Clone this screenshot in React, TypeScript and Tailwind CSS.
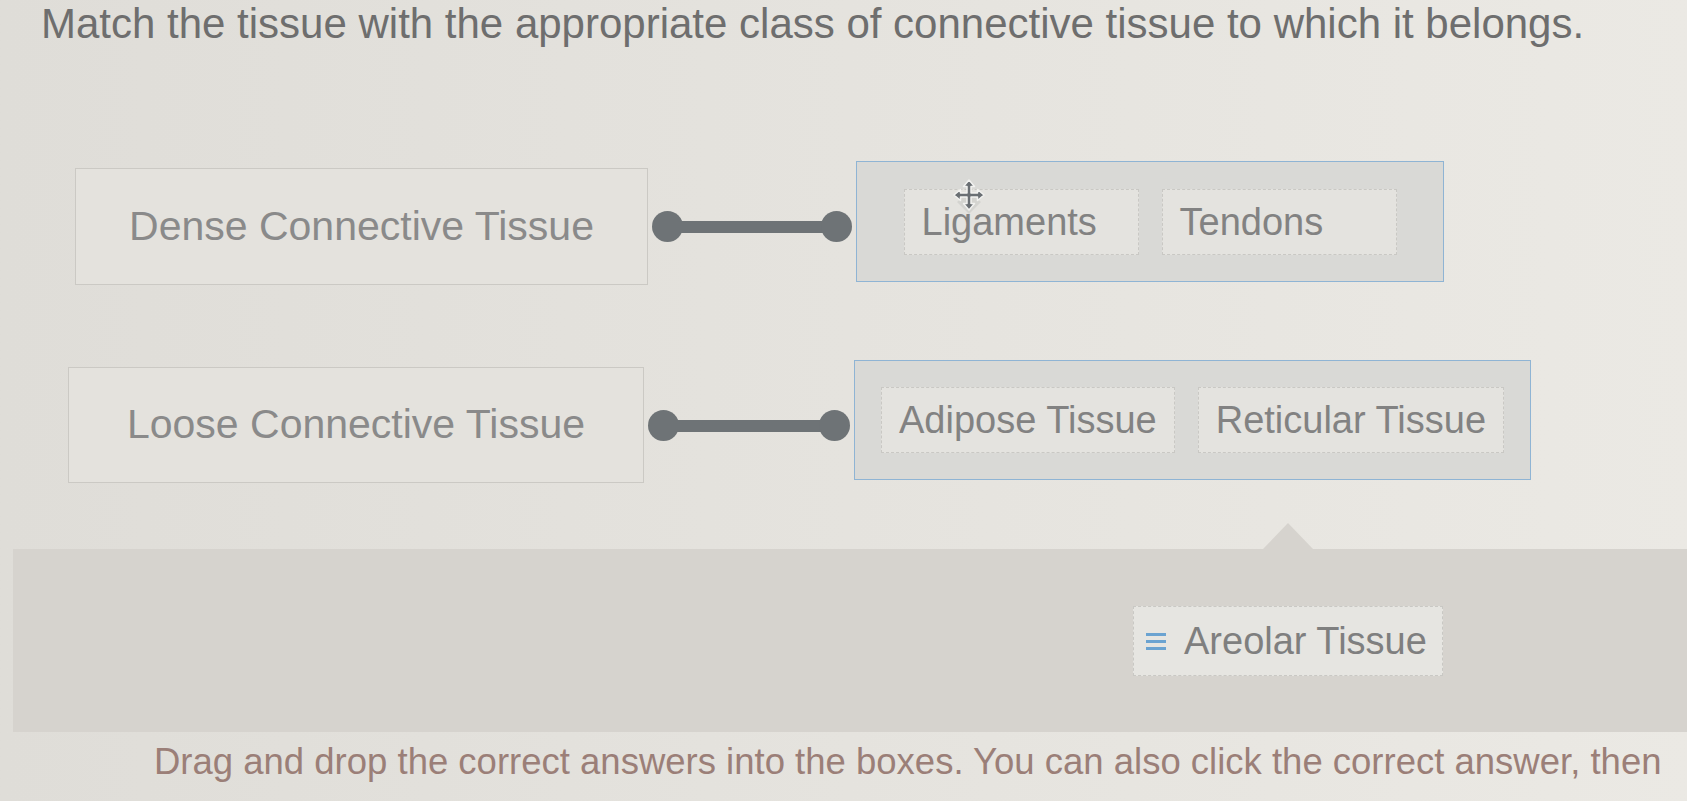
const font = { fontFamily: '"Liberation Sans", Arial, sans-serif' };

function MoveCursor() {
  return (
    <svg
      width="36"
      height="38"
      viewBox="0 0 36 38"
      className="absolute left-[46px] top-[-12px]"
    >
      <path d="M18 14 L30 24 L18 36 L6 24 Z" fill="#cfcfcc" opacity="0.8" />
      <path
        d="M18 2 L23.5 8.5 L20 8.5 L20 15 L26.5 15 L26.5 11.5 L33 17 L26.5 22.5 L26.5 19 L20 19 L20 25.5 L23.5 25.5 L18 32 L12.5 25.5 L16 25.5 L16 19 L9.5 19 L9.5 22.5 L3 17 L9.5 11.5 L9.5 15 L16 15 L16 8.5 L12.5 8.5 Z"
        fill="#6a6f73"
        stroke="#f2f2f0"
        strokeWidth="1.5"
        strokeLinejoin="round"
      />
    </svg>
  );
}

function Chip({ label, cursor }: { label: string; cursor?: boolean }) {
  return (
    <div className="relative flex h-[66px] min-w-[235px] items-center border-[1.5px] border-dashed border-[#c9c8c4] bg-[#e4e3df] px-[17px] text-[38px] text-[#828282]">
      {cursor && <MoveCursor />}
      <span className="leading-none">{label}</span>
    </div>
  );
}

function Connector({ width }: { width: string }) {
  return (
    <div className={`flex items-center px-[4px] ${width}`}>
      <div className="h-[31px] w-[31px] shrink-0 rounded-full bg-[#6e7376]" />
      <div className="-mx-[4px] h-[12px] flex-1 bg-[#6e7376]" />
      <div className="h-[31px] w-[31px] shrink-0 rounded-full bg-[#6e7376]" />
    </div>
  );
}

const rows = [
  {
    label: "Dense Connective Tissue",
    answers: ["Ligaments", "Tendons"],
    pad: "pl-[75px]",
    box: "w-[573px] h-[117px]",
    conn: "w-[208px]",
    zoneH: "h-[121px]",
  },
  {
    label: "Loose Connective Tissue",
    answers: ["Adipose Tissue", "Reticular Tissue"],
    pad: "pl-[68px]",
    box: "w-[576px] h-[116px]",
    conn: "w-[210px]",
    zoneH: "h-[120px]",
  },
];

export default function App() {
  return (
    <div
      className="relative h-[801px] w-[1687px] overflow-hidden bg-gradient-to-r from-[#dfddd8] via-[#e5e3de] to-[#ebe9e4]"
      style={font}
    >
      <h1 className="pl-[41px] text-[42px] font-normal leading-[48px] text-[#6e6e6e]">
        Match the tissue with the appropriate class of connective tissue to which it belongs.
      </h1>

      <div className="mt-[113px] flex flex-col gap-[75px]">
        {rows.map((r, i) => (
          <div key={r.label} className={`flex items-start ${r.pad}`}>
            <div
              className={`mt-[7px] flex items-center justify-center border border-[#cbc9c4] bg-[#e4e2dd] text-[41px] text-[#8a8a8a] ${r.box}`}
            >
              {r.label}
            </div>
            <div className="mt-[50px]">
              <Connector width={r.conn} />
            </div>
            <div
              className={`flex min-w-[588px] items-center justify-center gap-[23px] border-[1.5px] border-[#8fb4d4] bg-[#d9d9d6] px-[26px] ${r.zoneH}`}
            >
              {r.answers.map((a, j) => (
                <Chip key={a} label={a} cursor={i === 0 && j === 0} />
              ))}
            </div>
          </div>
        ))}
      </div>

      <div className="relative ml-[13px] mt-[66px] flex h-[183px] items-center bg-[#d6d3ce] pl-[1120px]">
        <div className="absolute left-[1250px] top-[-26px] h-0 w-0 border-x-[25px] border-b-[26px] border-x-transparent border-b-[#d6d3ce]" />
        <div className="flex h-[70px] w-[310px] items-center gap-[18px] border-[1.5px] border-dashed border-[#c9c8c4] bg-[#e6e5e1] px-[12px] text-[38px] text-[#7f7f7f]">
          <svg width="20" height="20" viewBox="0 0 20 20" className="shrink-0">
            <rect x="0" y="2" width="20" height="3" fill="#6ba3d1" />
            <rect x="0" y="9" width="20" height="3" fill="#6ba3d1" />
            <rect x="0" y="16" width="20" height="3" fill="#6ba3d1" />
          </svg>
          <span className="leading-none">Areolar Tissue</span>
        </div>
      </div>

      <p className="mt-[5px] whitespace-nowrap pl-[154px] text-[36.5px] leading-[50px] text-[#9b7f78]">
        Drag and drop the correct answers into the boxes. You can also click the correct answer, then
      </p>
    </div>
  );
}
